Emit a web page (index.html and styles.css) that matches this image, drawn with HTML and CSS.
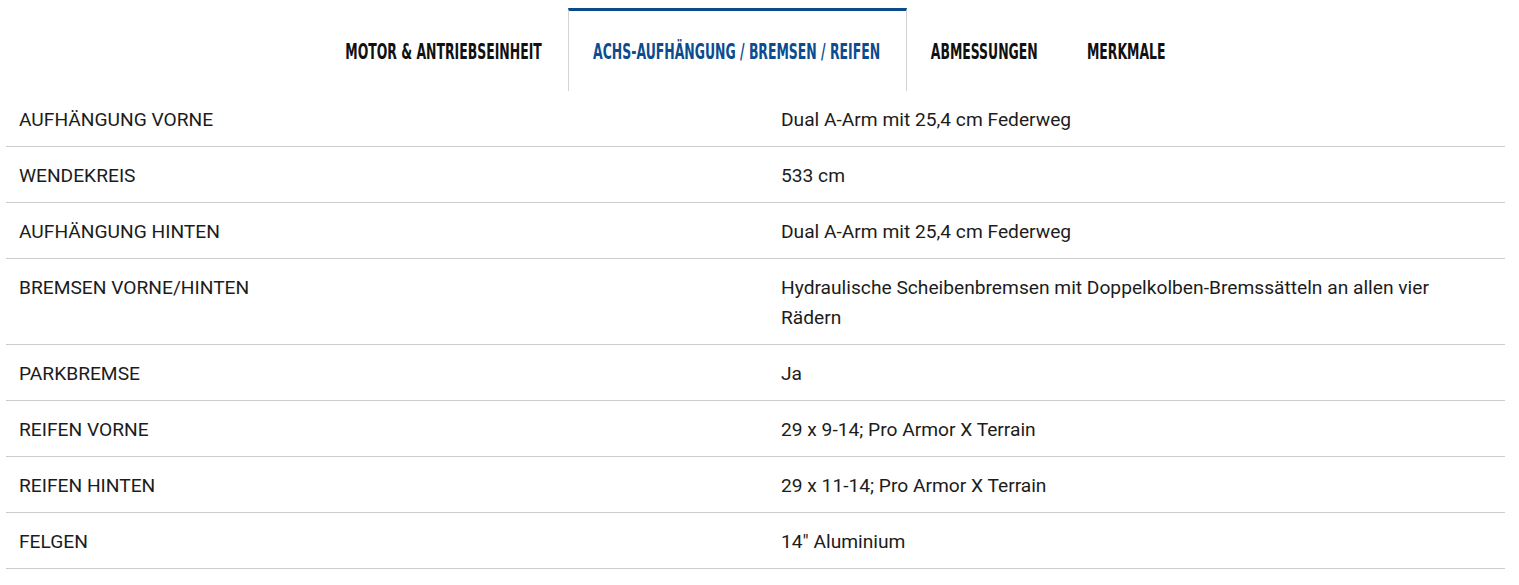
FILE: index.html
```html
<!DOCTYPE html>
<html lang="de">
<head>
<meta charset="utf-8">
<link rel="stylesheet" href="styles.css">
</head>
<body>
<div class="wrap">
  <nav class="tabs">
    <div class="tab tab-motor"><span class="tab-label">MOTOR &amp; ANTRIEBSEINHEIT</span></div>
    <div class="tab tab-achs active"><span class="tab-label">ACHS-AUFHÄNGUNG / BREMSEN / REIFEN</span></div>
    <div class="tab tab-abm"><span class="tab-label">ABMESSUNGEN</span></div>
    <div class="tab tab-merk"><span class="tab-label">MERKMALE</span></div>
  </nav>
  <div class="specs">
    <div class="row"><div class="k">AUFHÄNGUNG VORNE</div><div class="v">Dual A-Arm mit 25,4 cm Federweg</div></div>
    <div class="row"><div class="k">WENDEKREIS</div><div class="v">533 cm</div></div>
    <div class="row"><div class="k">AUFHÄNGUNG HINTEN</div><div class="v">Dual A-Arm mit 25,4 cm Federweg</div></div>
    <div class="row"><div class="k">BREMSEN VORNE/HINTEN</div><div class="v">Hydraulische Scheibenbremsen mit Doppelkolben-Bremssätteln an allen vier Rädern</div></div>
    <div class="row"><div class="k">PARKBREMSE</div><div class="v">Ja</div></div>
    <div class="row"><div class="k">REIFEN VORNE</div><div class="v">29 x 9-14; Pro Armor X Terrain</div></div>
    <div class="row"><div class="k">REIFEN HINTEN</div><div class="v">29 x 11-14; Pro Armor X Terrain</div></div>
    <div class="row"><div class="k">FELGEN</div><div class="v">14" Aluminium</div></div>
  </div>
</div>
</body>
</html>
```

FILE: styles.css
```css
html, body {
  margin: 0;
  padding: 0;
  background: #fff;
}
.wrap {
  margin-left: 6px;
  width: 1499px;
}
.tabs {
  display: flex;
  justify-content: center;
  padding-top: 8px;
}
.tab {
  box-sizing: border-box;
  height: 83px;
  display: flex;
  align-items: center;
  justify-content: center;
  border-top: 3px solid transparent;
  border-left: 1px solid transparent;
  border-right: 1px solid transparent;
  font-family: "DejaVu Sans Condensed", "DejaVu Sans", sans-serif;
  font-weight: 700;
  font-size: 20.5px;
  color: #111;
  white-space: nowrap;
}
.tab-label {
  display: inline-block;
  transform: scaleX(0.675);
  padding-top: 1px;
}
.tab-motor { width: 247px; }
.tab-achs { width: 339px; }
.tab-abm { width: 156px; }
.tab-merk { width: 128px; }
.tab.active {
  color: #0c4c8f;
  border-top-color: #0c4a8a;
  border-left-color: #d4d4d4;
  border-right-color: #d4d4d4;
}
.specs {
  font-family: Roboto, "Liberation Sans", sans-serif;
  font-size: 19.2px;
  line-height: 30px;
  color: #1c1c1c;
}
.row {
  display: grid;
  grid-template-columns: 762px 1fr;
  border-bottom: 1px solid #cccccc;
  padding: 14px 0 11px;
}
.k, .v {
  padding: 0 13px;
}
```
